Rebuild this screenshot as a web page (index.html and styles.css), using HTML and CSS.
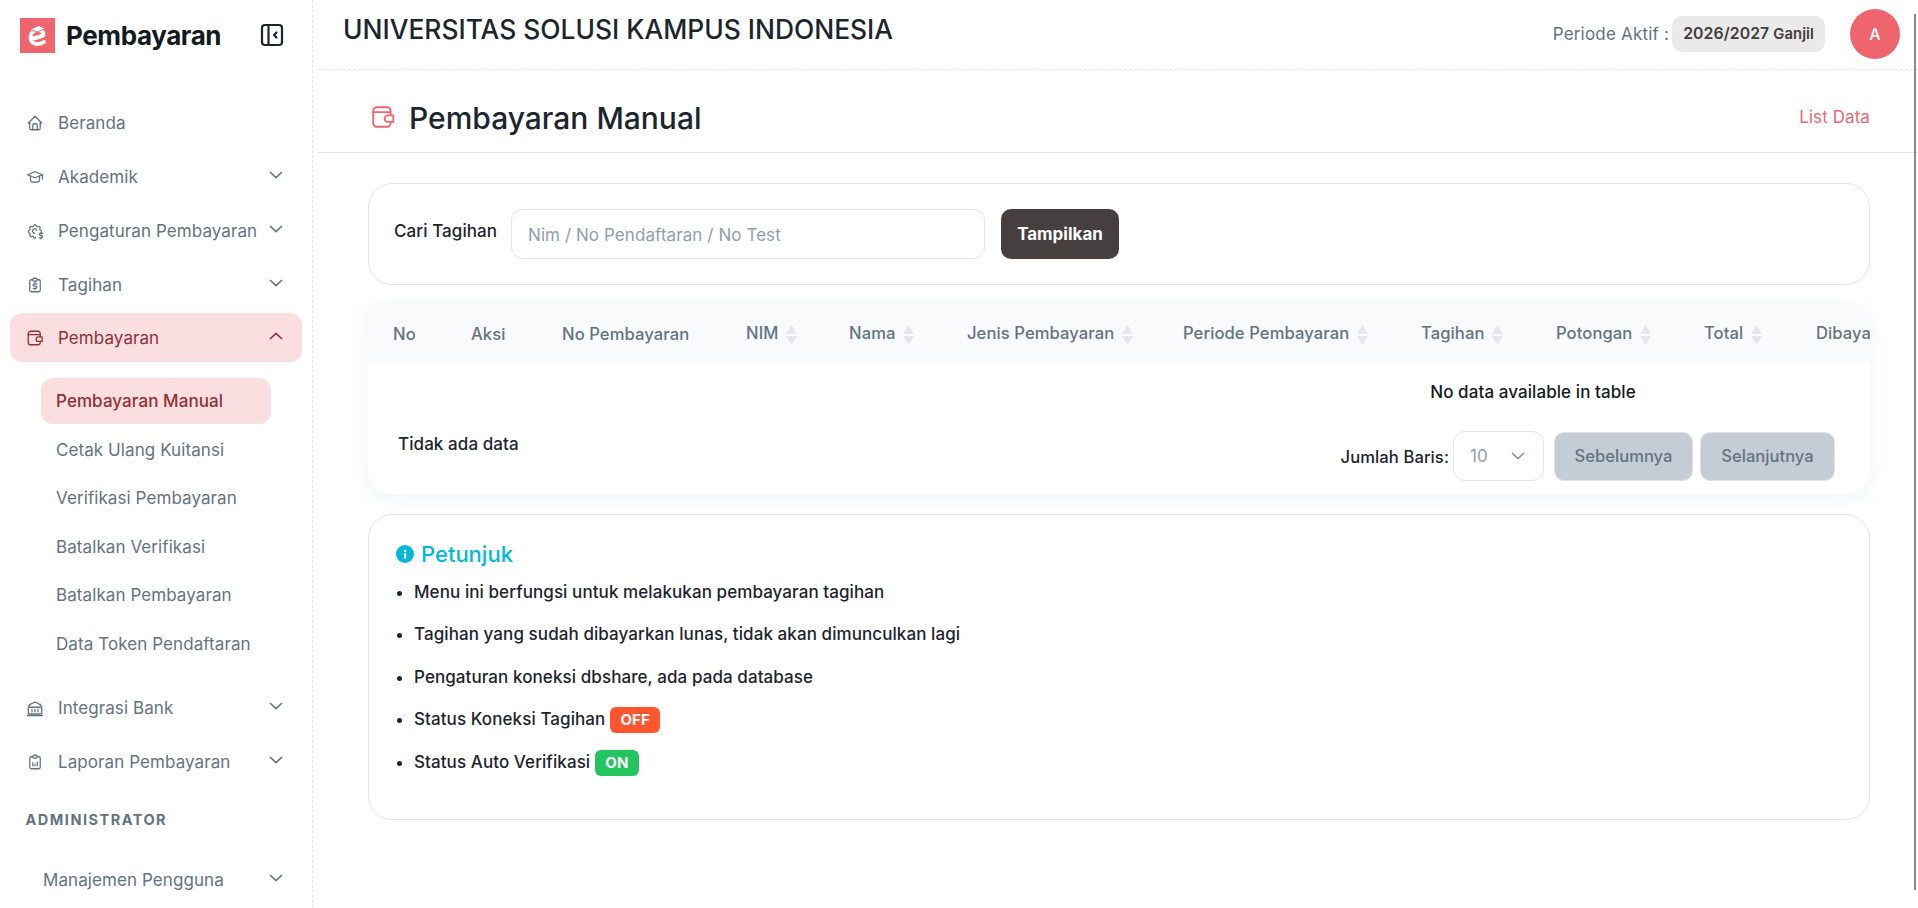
FILE: index.html
```html
<!DOCTYPE html>
<html lang="en">
<head>
    <meta charset="UTF-8">
    <meta name="viewport" content="width=device-width, initial-scale=1.0">
    <title>Pembayaran Manual</title>
    <link rel="stylesheet" href="styles.css">
</head>
<body>
    <svg class="sprite" width="0" height="0">
        <symbol id="chev-down" viewBox="0 0 14 8"><path d="M1 1l6 5.600L13 1"/></symbol>
        <symbol id="chev-up" viewBox="0 0 14 8"><path d="M1 7l6-5.600L13 7"/></symbol>
        <symbol id="wallet" viewBox="0 0 24 24"><path d="M19 10V6a3 3 0 0 0-3-3H6a3 3 0 0 0-3 3v12a3 3 0 0 0 3 3h10a3 3 0 0 0 3-3v-1"/><path d="M3 7.500h16"/><path d="M21.500 10.500h-5a3 3 0 0 0 0 6h5z"/></symbol>
        <symbol id="sort" viewBox="0 0 11 20"><path d="M5.500 0L11 9H0z"/><path d="M0 11h11l-5.500 9z"/></symbol>
    </svg>

    <div class="scroll-thumb"></div>

    <div class="layout">
        <aside class="sidebar">
            <div class="brand">
                <svg class="brand-logo" viewBox="0 0 35 35">
                    <rect width="35" height="35" fill="#ee656e"/>
                    <path d="M11 20c4 .8 8-.4 12.500-3 0-3.500-2.500-5-5.500-5-4.500 0-7.500 3-7.500 7.500 0 4.500 3.500 6.500 7 6.500 2.500 0 4.500-.6 6.500-2" fill="none" stroke="#fff" stroke-width="3.800" stroke-linecap="round"/>
                    <path d="M10 11.500l8.500-4 7 2.800-8 3.700z" fill="#fff" stroke="#ee656e" stroke-width="1"/>
                </svg>
                <span class="brand-name">Pembayaran</span>
                <svg class="brand-toggle" viewBox="0 0 24 24">
                    <rect x="2" y="2" width="20" height="20" rx="3"/>
                    <path d="M8.500 2v20"/>
                    <path d="M16.500 9.500L14 12l2.500 2.500"/>
                </svg>
            </div>

            <nav class="nav">
                <a class="nav-item">
                    <svg class="nav-icon" viewBox="0 0 24 24"><path d="M5 12H3l9-9 9 9h-2"/><path d="M5 12v7a2 2 0 0 0 2 2h10a2 2 0 0 0 2-2v-7"/><path d="M9 21v-6a2 2 0 0 1 2-2h2a2 2 0 0 1 2 2v6"/></svg>
                    <span class="nav-label">Beranda</span>
                </a>
                <a class="nav-item">
                    <svg class="nav-icon" viewBox="0 0 24 24"><path d="M22 9L12 5 2 9l10 4 10-4v6"/><path d="M6 10.600V16a6 3 0 0 0 12 0v-5.400"/></svg>
                    <span class="nav-label">Akademik</span>
                    <svg class="nav-chev"><use href="#chev-down"/></svg>
                </a>
                <a class="nav-item">
                    <svg class="nav-icon" viewBox="0 0 24 24"><path d="M13 20.800c-.5 1.300-2.500 1-2.700-.4a1.700 1.700 0 0 0-2.600-1.100c-1.500.9-3.300-.8-2.400-2.400a1.700 1.700 0 0 0-1-2.500c-1.800-.5-1.800-3 0-3.400a1.700 1.700 0 0 0 1-2.600c-.9-1.500.9-3.300 2.400-2.300 1 .6 2.300 0 2.600-1.100.4-1.800 2.900-1.800 3.300 0a1.700 1.700 0 0 0 2.600 1.100c1.500-1 3.300.8 2.400 2.300a1.700 1.700 0 0 0 1 2.600c.7.200 1.100.7 1.200 1.300"/><path d="M14.500 11a3 3 0 1 0-3 4"/><path d="M22 15h-2.500a1.500 1.500 0 0 0 0 3h1a1.500 1.500 0 0 1 0 3H18"/><path d="M20 21v1.500M20 13.500V15"/></svg>
                    <span class="nav-label">Pengaturan Pembayaran</span>
                    <svg class="nav-chev"><use href="#chev-down"/></svg>
                </a>
                <a class="nav-item">
                    <svg class="nav-icon" viewBox="0 0 24 24"><path d="M9 5H7a2 2 0 0 0-2 2v12a2 2 0 0 0 2 2h10a2 2 0 0 0 2-2V7a2 2 0 0 0-2-2h-2"/><rect x="9" y="3" width="6" height="4" rx="2"/><path d="M14.500 10.500h-3.500a1.500 1.500 0 0 0 0 3h2a1.500 1.500 0 0 1 0 3H9.500"/><path d="M12 16.500v1.500M12 9v1.500"/></svg>
                    <span class="nav-label">Tagihan</span>
                    <svg class="nav-chev"><use href="#chev-down"/></svg>
                </a>
                <a class="nav-item active">
                    <svg class="nav-icon" viewBox="0 0 24 24"><use href="#wallet"/></svg>
                    <span class="nav-label">Pembayaran</span>
                    <svg class="nav-chev"><use href="#chev-up"/></svg>
                </a>
                <div class="subnav">
                    <a class="subnav-item active">Pembayaran Manual</a>
                    <a class="subnav-item">Cetak Ulang Kuitansi</a>
                    <a class="subnav-item">Verifikasi Pembayaran</a>
                    <a class="subnav-item">Batalkan Verifikasi</a>
                    <a class="subnav-item">Batalkan Pembayaran</a>
                    <a class="subnav-item">Data Token Pendaftaran</a>
                </div>
                <a class="nav-item">
                    <svg class="nav-icon" viewBox="0 0 24 24"><path d="M3 9.500C6 6.500 9 5 12 4c3 1 6 2.500 9 5.500"/><path d="M5 7.800V7M19 7.800V7"/><rect x="3" y="11" width="18" height="9" rx="1"/><path d="M8 14v3M12 14v3M16 14v3"/><path d="M2 22h20"/></svg>
                    <span class="nav-label">Integrasi Bank</span>
                    <svg class="nav-chev"><use href="#chev-down"/></svg>
                </a>
                <a class="nav-item">
                    <svg class="nav-icon" viewBox="0 0 24 24"><path d="M9 5H7a2 2 0 0 0-2 2v12a2 2 0 0 0 2 2h10a2 2 0 0 0 2-2V7a2 2 0 0 0-2-2h-2"/><rect x="9" y="3" width="6" height="4" rx="2"/><path d="M9 17v-4M12 17v-2M15 17v-5"/></svg>
                    <span class="nav-label">Laporan Pembayaran</span>
                    <svg class="nav-chev"><use href="#chev-down"/></svg>
                </a>
                <div class="nav-heading">ADMINISTRATOR</div>
                <a class="nav-item no-icon">
                    <span class="nav-label">Manajemen Pengguna</span>
                    <svg class="nav-chev"><use href="#chev-down"/></svg>
                </a>
            </nav>
        </aside>

        <main class="main">
            <header class="topbar">
                <div class="campus">UNIVERSITAS SOLUSI KAMPUS INDONESIA</div>
                <div class="period">Periode Aktif :</div>
                <div class="period-badge">2026/2027 <span class="period-term">Ganjil</span></div>
                <div class="avatar">A</div>
            </header>

            <div class="page-head">
                <svg class="page-icon" viewBox="0 0 24 24"><use href="#wallet"/></svg>
                <h1>Pembayaran Manual</h1>
                <a class="page-link">List Data</a>
            </div>

            <div class="content">
                <section class="card search-card">
                    <label class="search-label">Cari Tagihan</label>
                    <input class="search-input" type="text" placeholder="Nim / No Pendaftaran / No Test">
                    <button class="btn-dark">Tampilkan</button>
                </section>

                <section class="card-table">
                    <div class="table-wrap">
                        <table class="data-table">
                            <colgroup>
                                <col class="w-no"><col class="w-aksi"><col class="w-nopem"><col class="w-nim">
                                <col class="w-nama"><col class="w-jenis"><col class="w-periode"><col class="w-tagihan">
                                <col class="w-potongan"><col class="w-total"><col class="w-dibayar">
                            </colgroup>
                            <thead>
                                <tr>
                                    <th>No</th>
                                    <th>Aksi</th>
                                    <th>No Pembayaran</th>
                                    <th>NIM <svg class="sort"><use href="#sort"/></svg></th>
                                    <th>Nama <svg class="sort"><use href="#sort"/></svg></th>
                                    <th>Jenis Pembayaran <svg class="sort"><use href="#sort"/></svg></th>
                                    <th>Periode Pembayaran <svg class="sort"><use href="#sort"/></svg></th>
                                    <th>Tagihan <svg class="sort"><use href="#sort"/></svg></th>
                                    <th>Potongan <svg class="sort"><use href="#sort"/></svg></th>
                                    <th>Total <svg class="sort"><use href="#sort"/></svg></th>
                                    <th>Dibayar <svg class="sort"><use href="#sort"/></svg></th>
                                </tr>
                            </thead>
                            <tbody>
                                <tr><td class="empty" colspan="11">No data available in table</td></tr>
                            </tbody>
                        </table>
                    </div>
                    <div class="table-foot">
                        <div class="table-info">Tidak ada data</div>
                        <div class="rows-label">Jumlah Baris:</div>
                        <div class="rows-select">10 <svg class="select-chev"><use href="#chev-down"/></svg></div>
                        <button class="btn-page" disabled>Sebelumnya</button>
                        <button class="btn-page" disabled>Selanjutnya</button>
                    </div>
                </section>

                <section class="card hint-card">
                    <h2 class="hint-title">
                        <svg class="hint-icon" viewBox="0 0 18 18"><circle cx="9" cy="9" r="9" fill="#00b8d9"/><rect x="8" y="8" width="2.200" height="5.500" fill="#fff"/><rect x="8" y="4.700" width="2.200" height="2.200" fill="#fff"/></svg>
                        Petunjuk
                    </h2>
                    <ul class="hint-list">
                        <li>Menu ini berfungsi untuk melakukan pembayaran tagihan</li>
                        <li>Tagihan yang sudah dibayarkan lunas, tidak akan dimunculkan lagi</li>
                        <li>Pengaturan koneksi dbshare, ada pada database</li>
                        <li>Status Koneksi Tagihan <span class="tag tag-off">OFF</span></li>
                        <li>Status Auto Verifikasi <span class="tag tag-on">ON</span></li>
                    </ul>
                </section>
            </div>
        </main>
    </div>
</body>
</html>
```

FILE: styles.css
```css
* {
    box-sizing: border-box;
}
html, body {
    height: 100%;
}
body {
    margin: 0;
    overflow: hidden;
    font-family: Inter, "Liberation Sans", sans-serif;
    font-size: 17px;
    letter-spacing: 0.08px;
    color: #141a21;
    background-color: #fff;
}
.sprite {
    position: absolute;
}
.scroll-thumb {
    position: absolute;
    top: 14px;
    right: 2px;
    width: 2px;
    height: 876px;
    background-color: #8a8a8a;
}
.layout {
    display: flex;
    height: 908px;
}

/* sidebar */
.sidebar {
    flex: 0 0 313px;
    border-right: 1px dashed #e3e5e8;
}
.brand {
    display: flex;
    align-items: center;
    height: 70px;
    padding: 0 28px 0 20px;
}
.brand-logo {
    width: 35px;
    height: 35px;
    margin-right: 11px;
}
.brand-name {
    flex: 1;
    font-size: 26px;
    font-weight: 700;
    letter-spacing: -0.4px;
}
.brand-toggle {
    width: 24px;
    height: 24px;
    fill: none;
    stroke: #1c252e;
    stroke-width: 2.200;
    stroke-linecap: round;
    stroke-linejoin: round;
}
.nav {
    display: flex;
    flex-direction: column;
    padding: 28px 10px 0;
}
.nav-item {
    display: flex;
    align-items: center;
    flex: 0 0 49px;
    margin-bottom: 5px;
    padding: 0 19px 0 16px;
    border-radius: 12px;
    color: #637381;
}
.nav-icon {
    width: 18px;
    height: 18px;
    margin-right: 14px;
    fill: none;
    stroke: currentColor;
    stroke-width: 1.700;
    stroke-linecap: round;
    stroke-linejoin: round;
}
.nav-label {
    flex: 1;
    white-space: nowrap;
}
.nav-chev {
    width: 14px;
    height: 8px;
    margin-top: -3px;
    fill: none;
    stroke: currentColor;
    stroke-width: 1.600;
}
.nav-item.active {
    background-color: #fbdfe0;
    color: #8f3037;
    margin-top: -1px;
    margin-bottom: 0;
}
.nav-item.no-icon {
    padding-left: 33px;
}
.subnav {
    display: flex;
    flex-direction: column;
    gap: 2.600px;
    padding: 16px 0 16.500px 31px;
}
.subnav-item {
    display: flex;
    align-items: center;
    width: 230px;
    height: 46px;
    padding-left: 15px;
    border-radius: 12px;
    color: #637381;
    white-space: nowrap;
}
.subnav-item.active {
    background-color: #fbdfe0;
    color: #8f3037;
    font-weight: 500;
}
.nav-heading {
    margin: 17px 0 23px 15.500px;
    height: 24px;
    line-height: 24px;
    font-size: 14.500px;
    font-weight: 700;
    letter-spacing: 1.500px;
    color: #637381;
}

/* top bar */
.main {
    flex: 1;
    min-width: 0;
    margin-left: 5px;
}
.topbar {
    display: flex;
    align-items: center;
    height: 70px;
    padding: 0 18px 2px 25px;
    border-bottom: 1px dashed #e3e5e8;
}
.campus {
    flex: 1;
    margin-top: -9px;
    font-size: 26.400px;
    font-weight: 500;
    letter-spacing: 0;
    color: #1c252e;
}
.period {
    margin-right: 3px;
    letter-spacing: 0.2px;
    color: #637381;
}
.period-badge {
    display: flex;
    align-items: center;
    gap: 4px;
    height: 36px;
    padding: 0 11px;
    border-radius: 10px;
    background-color: #eaeaea;
    font-size: 15.800px;
    font-weight: 600;
    color: #3f3d3d;
    white-space: nowrap;
}
.period-term {
    font-size: 14.800px;
}
.avatar {
    display: flex;
    align-items: center;
    justify-content: center;
    width: 50px;
    height: 50px;
    margin-left: 25px;
    border-radius: 50%;
    background-color: #ee656e;
    color: #fff;
    font-size: 16px;
    font-weight: 500;
}

/* page head */
.page-head {
    display: flex;
    align-items: center;
    height: 83px;
    padding: 12px 48px 0 52px;
    border-bottom: 1px solid #e3e5e8;
}
.page-icon {
    width: 26px;
    height: 26px;
    margin-right: 13px;
    fill: none;
    stroke: #ee656e;
    stroke-width: 1.700;
    stroke-linecap: round;
    stroke-linejoin: round;
}
.page-head h1 {
    flex: 1;
    margin: 2px 0 0;
    font-size: 30px;
    font-weight: 500;
    letter-spacing: 0;
    color: #1c252e;
}
.page-link {
    color: #ee656e;
}

/* cards */
.content {
    display: flex;
    flex-direction: column;
    padding: 30px 48px 0 50px;
}
.card {
    border: 1px solid #e3e5e8;
    border-radius: 24px;
    background-color: #fff;
}
.search-card {
    display: flex;
    align-items: flex-start;
    height: 102px;
    padding: 25px 0 0 25px;
    margin-bottom: 19px;
}
.search-label {
    width: 117px;
    line-height: 44px;
    font-size: 17px;
    font-weight: 500;
    color: #1c252e;
}
.search-input {
    width: 474px;
    height: 50px;
    padding: 2px 16px 0;
    border: 1px solid #e3e5e8;
    border-radius: 12px;
    outline: none;
    font: inherit;
    letter-spacing: inherit;
}
.search-input::placeholder {
    color: #919eab;
}
.btn-dark {
    width: 118px;
    height: 50px;
    margin-left: 16px;
    border: none;
    border-radius: 10px;
    background-color: #453f3f;
    color: #fff;
    font: inherit;
    font-weight: 700;
}

/* table */
.card-table {
    height: 190px;
    margin-bottom: 20px;
    border-radius: 10px 24px 24px 24px;
    background-color: #fff;
    box-shadow: 0 4px 20px rgba(145, 158, 171, 0.14);
}
.table-wrap {
    overflow: hidden;
    height: 118px;
    border-radius: 10px 24px 0 0;
}
.data-table {
    width: 2330px;
    table-layout: fixed;
    border-collapse: collapse;
}
.w-no { width: 78px; }
.w-aksi { width: 91px; }
.w-nopem { width: 184px; }
.w-nim { width: 103px; }
.w-nama { width: 118px; }
.w-jenis { width: 216px; }
.w-periode { width: 238px; }
.w-tagihan { width: 135px; }
.w-potongan { width: 148px; }
.w-total { width: 112px; }
.data-table th {
    height: 58px;
    padding: 2px 0 0 25px;
    background-color: #f9fafb;
    color: #637381;
    font-size: 16.600px;
    font-weight: 500;
    text-align: left;
    white-space: nowrap;
}
.sort {
    width: 11px;
    height: 20px;
    margin-left: 3px;
    vertical-align: middle;
    fill: #e4e7ea;
}
.empty {
    height: 58px;
    text-align: center;
    font-weight: 500;
    padding-bottom: 0;
}
.table-foot {
    display: flex;
    align-items: center;
    height: 50px;
    margin-top: 9px;
    padding: 0 35px 0 30px;
}
.table-info {
    flex: 1;
    margin-top: -24px;
    font-weight: 500;
    color: #1c252e;
}
.rows-label {
    margin-right: 4px;
    margin-top: 2px;
    font-size: 16.600px;
    font-weight: 500;
    color: #1c252e;
}
.rows-select {
    display: flex;
    align-items: center;
    justify-content: space-between;
    width: 91px;
    height: 50px;
    padding: 0 18px 0 16px;
    margin-right: 10px;
    border: 1px solid #e3e5e8;
    border-radius: 12px;
    color: #919eab;
}
.select-chev {
    width: 14px;
    height: 8px;
    fill: none;
    stroke: #7d8996;
    stroke-width: 1.400;
}
.btn-page {
    height: 49px;
    margin-left: 0;
    padding: 0;
    border: 1px solid #dfe3e8;
    border-radius: 10px;
    background-color: #c4cdd5;
    color: #637381;
    font: inherit;
    font-size: 16.600px;
    font-weight: 500;
}
.btn-page:first-of-type {
    width: 139px;
    margin-right: 7px;
}
.btn-page:last-of-type {
    width: 135px;
}

/* hints */
.hint-card {
    height: 306px;
    padding: 26px 27px;
}
.hint-title {
    display: flex;
    align-items: center;
    gap: 7px;
    height: 26px;
    margin: 0 0 3.500px;
    font-size: 22px;
    font-weight: 500;
    letter-spacing: 0;
    color: #00b8d9;
}
.hint-icon {
    width: 18px;
    height: 18px;
}
.hint-list {
    margin: 0;
    padding: 0 0 0 18px;
    font-weight: 500;
    color: #1c252e;
}
.hint-list li {
    height: 42.500px;
    line-height: 42.500px;
}
.tag {
    display: inline-block;
    height: 26px;
    line-height: 26px;
    padding: 0 10.500px;
    border-radius: 6px;
    color: #fff;
    font-size: 15px;
    font-weight: 700;
}
.tag-off {
    background-color: #ff5630;
}
.tag-on {
    background-color: #22c55e;
}
```
